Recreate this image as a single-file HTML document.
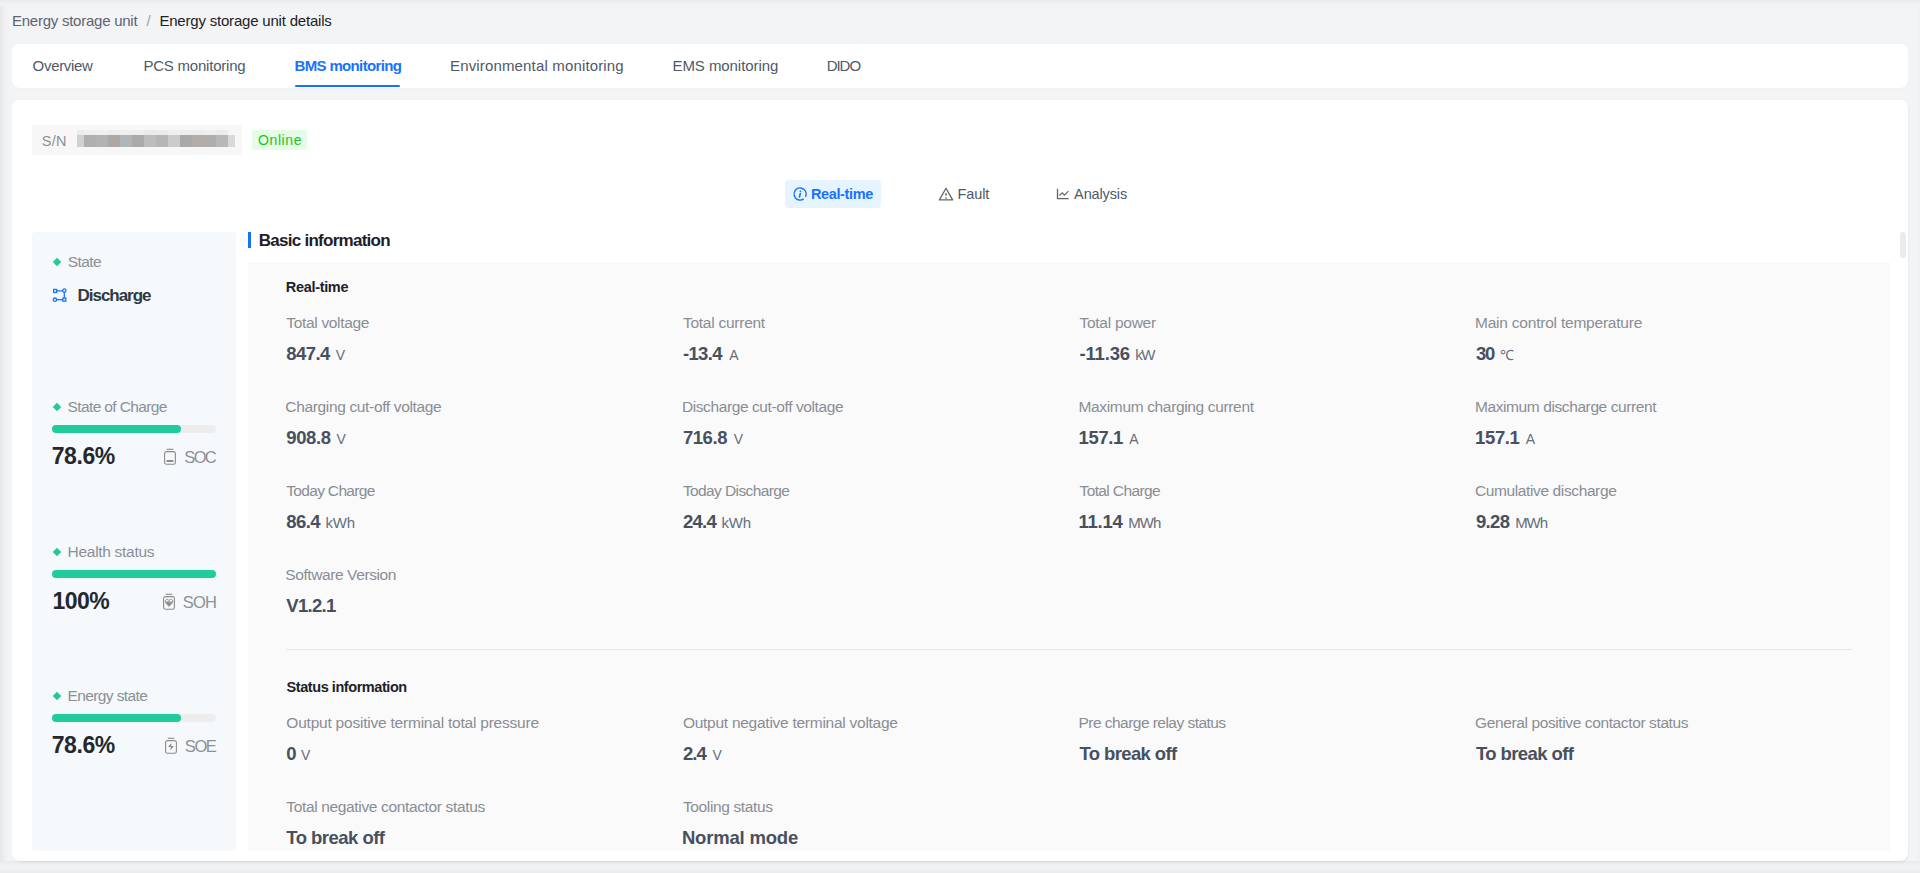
<!DOCTYPE html>
<html><head><meta charset="utf-8">
<style>
*{box-sizing:border-box;margin:0;padding:0}
html,body{width:1920px;height:873px;overflow:hidden}
body{background:#f3f4f6;font-family:"Liberation Sans",sans-serif;position:relative}
.t{position:absolute;white-space:nowrap;line-height:1;font-family:"Liberation Sans",sans-serif}
.v{font-size:18px;font-weight:700;color:#3d4757}
.v .u{font-size:14px;font-weight:400;color:#5c6675;margin-left:6px}
.box{position:absolute}
</style></head><body>
<div class="box" style="left:0;top:0;width:12px;height:873px;background:linear-gradient(90deg,#e6e7e9 0,#e9eaec 2px,#eff0f2 5px,#f3f4f6 10px,#f3f4f6 12px)"></div>
<div class="box" style="left:1908px;top:0;width:12px;height:873px;background:linear-gradient(90deg,#f3f4f6 0,#f3f4f6 8px,#f1f2f4 11px,#eeeff1 12px)"></div>
<div class="box" style="left:0;top:861px;width:1920px;height:12px;background:linear-gradient(180deg,#e9eaec 0,#eff0f2 4px,#f1f2f4 7px,#eaebed 12px)"></div>
<div class="box" style="left:0;top:0;width:1920px;height:6px;background:linear-gradient(180deg,#e9eaec 0,#eeeff1 2px,#f3f4f6 6px)"></div>
<!-- nav card -->
<div class="box" style="left:12px;top:44px;width:1896px;height:44px;background:#fff;border-radius:8px;box-shadow:0 1px 2px -1px rgba(0,0,0,0.06)"></div>
<div class="box" style="left:295px;top:85px;width:105px;height:2px;background:#1772ff;border-radius:1px"></div>
<!-- main card -->
<div class="box" style="left:12px;top:100px;width:1896px;height:761px;background:#fff;border-radius:8px;box-shadow:1px 2px 3px -1px rgba(0,0,0,0.09)"></div>
<!-- SN box -->
<div class="box" style="left:32px;top:125px;width:210px;height:30px;background:#f7f7f7;border-radius:2px"></div>
<div class="box" style="left:77px;top:130px;width:7px;height:5px;background:#ececec"></div>
<div class="box" style="left:77px;top:135px;width:7px;height:12px;background:#d3d1cf"></div>
<div class="box" style="left:84px;top:130px;width:12px;height:5px;background:#efefef"></div>
<div class="box" style="left:84px;top:135px;width:12px;height:12px;background:#aeb0b0"></div>
<div class="box" style="left:96px;top:130px;width:12px;height:5px;background:#f1f1f1"></div>
<div class="box" style="left:96px;top:135px;width:12px;height:12px;background:#b3b3b3"></div>
<div class="box" style="left:108px;top:130px;width:12px;height:5px;background:#eeeeee"></div>
<div class="box" style="left:108px;top:135px;width:12px;height:12px;background:#aea7a4"></div>
<div class="box" style="left:120px;top:130px;width:12px;height:5px;background:#f0f0f0"></div>
<div class="box" style="left:120px;top:135px;width:12px;height:12px;background:#b1b5ba"></div>
<div class="box" style="left:132px;top:130px;width:12px;height:5px;background:#efefef"></div>
<div class="box" style="left:132px;top:135px;width:12px;height:12px;background:#aaaaaa"></div>
<div class="box" style="left:144px;top:130px;width:12px;height:5px;background:#ebebeb"></div>
<div class="box" style="left:144px;top:135px;width:12px;height:12px;background:#bdbdbd"></div>
<div class="box" style="left:156px;top:130px;width:12px;height:5px;background:#ebebeb"></div>
<div class="box" style="left:156px;top:135px;width:12px;height:12px;background:#b6b6b6"></div>
<div class="box" style="left:168px;top:130px;width:12px;height:5px;background:#f0f0f0"></div>
<div class="box" style="left:168px;top:135px;width:12px;height:12px;background:#cccbc9"></div>
<div class="box" style="left:180px;top:130px;width:12px;height:5px;background:#eeeeee"></div>
<div class="box" style="left:180px;top:135px;width:12px;height:12px;background:#a7a9ab"></div>
<div class="box" style="left:192px;top:130px;width:12px;height:5px;background:#ededed"></div>
<div class="box" style="left:192px;top:135px;width:12px;height:12px;background:#b3adaa"></div>
<div class="box" style="left:204px;top:130px;width:12px;height:5px;background:#efefef"></div>
<div class="box" style="left:204px;top:135px;width:12px;height:12px;background:#aeaeae"></div>
<div class="box" style="left:216px;top:130px;width:12px;height:5px;background:#ececec"></div>
<div class="box" style="left:216px;top:135px;width:12px;height:12px;background:#b7b8bc"></div>
<div class="box" style="left:228px;top:130px;width:7px;height:5px;background:#f6f6f6"></div>
<div class="box" style="left:228px;top:135px;width:7px;height:12px;background:#d9d9db"></div>
<div class="box" style="left:252px;top:130px;width:55px;height:20px;background:#e5fde6;border-radius:3px"></div>
<!-- segmented -->
<div class="box" style="left:785px;top:180px;width:96px;height:28px;background:#e6f4ff;border-radius:4px"></div>
<svg class="box" style="left:792px;top:186px" width="16" height="16" viewBox="0 0 16 16"><path d="M11.685 12.935 A6.1 6.1 0 1 1 13.435 10.957" fill="none" stroke="#1772ff" stroke-width="1.4"/><circle cx="8.45" cy="5.3" r="0.9" fill="#1772ff"/><path d="M8.3 7.5 L7.5 10.9" stroke="#1772ff" stroke-width="1.6" stroke-linecap="round"/></svg>
<svg class="box" style="left:938px;top:187px" width="16" height="15" viewBox="0 0 16 15"><path d="M8 1.3 L14.6 12.9 H1.4 Z" fill="none" stroke="#666" stroke-width="1.3" stroke-linejoin="round"/><path d="M8 5.9 V8.7" stroke="#777" stroke-width="1.5"/><rect x="7.25" y="10.1" width="1.5" height="1.8" fill="#888"/></svg>
<svg class="box" style="left:1056px;top:187px" width="14" height="14" viewBox="0 0 14 14"><path d="M1.5 1.8 V11.7 H12.7" fill="none" stroke="#666" stroke-width="1.3"/><path d="M3.3 8.5 L6.3 5.9 L8.4 8.2 L12.4 4.1" fill="none" stroke="#666" stroke-width="1.2"/></svg>
<!-- left panel -->
<div class="box" style="left:32px;top:232px;width:204px;height:619px;background:#f5f9fb;border-radius:4px"></div>
<div class="box" style="left:54px;top:259px;width:6px;height:6px;background:#23c99a;transform:rotate(45deg)"></div>
<svg class="box" style="left:52px;top:287px" width="16" height="16" viewBox="0 0 16 16"><g fill="none" stroke="#1772ff" stroke-width="1.3"><rect x="1.65" y="2.45" width="3" height="3"/><circle cx="12.3" cy="3.6" r="1.65"/><path d="M4.6 3.95 H10.6 M12.3 5.2 V11"/><circle cx="2.95" cy="12.65" r="1.65"/><rect x="10.8" y="11.1" width="3" height="3"/><path d="M4.6 12.65 H10.8"/></g></svg>
<div class="box" style="left:54px;top:404px;width:6px;height:6px;background:#23c99a;transform:rotate(45deg)"></div>
<div class="box" style="left:52px;top:425px;width:164px;height:8px;background:#ededed;border-radius:4px"></div>
<div class="box" style="left:52px;top:425px;width:129px;height:8px;background:#20cc9b;border-radius:4px"></div>
<div class="box" style="left:54px;top:549px;width:6px;height:6px;background:#23c99a;transform:rotate(45deg)"></div>
<div class="box" style="left:52px;top:570px;width:164px;height:8px;background:#20cc9b;border-radius:4px"></div>
<div class="box" style="left:54px;top:693px;width:6px;height:6px;background:#23c99a;transform:rotate(45deg)"></div>
<div class="box" style="left:52px;top:714px;width:164px;height:8px;background:#ededed;border-radius:4px"></div>
<div class="box" style="left:52px;top:714px;width:129px;height:8px;background:#20cc9b;border-radius:4px"></div>
<!-- battery icons -->
<svg class="box" style="left:163px;top:448px" width="14" height="17" viewBox="0 0 14 17"><path d="M3.7 1.3 H10.3" stroke="#8c8c8c" stroke-width="1.1"/><rect x="1.6" y="3.6" width="10.8" height="12.6" rx="1.8" fill="none" stroke="#8c8c8c" stroke-width="1.1"/><rect x="3.6" y="12" width="6.8" height="2" fill="#8c8c8c"/></svg>
<svg class="box" style="left:162px;top:593px" width="14" height="17" viewBox="0 0 14 17"><path d="M3.7 1.3 H10.3" stroke="#8c8c8c" stroke-width="1.1"/><rect x="1.6" y="3.6" width="10.8" height="12.6" rx="1.8" fill="none" stroke="#8c8c8c" stroke-width="1.1"/><path d="M7 13.3 L3.7 9.8 Q2.9 8.5 3.5 7.3 Q4.3 6 5.6 6.3 Q6.5 6.6 7 7.5 Q7.5 6.6 8.4 6.3 Q9.7 6 10.5 7.3 Q11.1 8.5 10.3 9.8 Z" fill="none" stroke="#8c8c8c" stroke-width="1"/><path d="M3.4 9.2 H10.6 L7 13.3 Z" fill="#8c8c8c"/><path d="M3.6 8.9 H5.3 L6 7.9 L7 9.3 L7.8 8.2 L8.4 8.9 H10.4" fill="none" stroke="#8c8c8c" stroke-width="0.8"/></svg>
<svg class="box" style="left:164px;top:737px" width="14" height="17" viewBox="0 0 14 17"><path d="M3.7 1.3 H10.3" stroke="#8c8c8c" stroke-width="1.1"/><rect x="1.6" y="3.6" width="10.8" height="12.6" rx="1.8" fill="none" stroke="#8c8c8c" stroke-width="1.1"/><path d="M7.5 6.1 L4.1 10.1 H6.9 L6.3 13.5 L9.9 9.1 H7.1 Z" fill="#8c8c8c"/></svg>
<!-- basic info -->
<div class="box" style="left:248px;top:232px;width:3px;height:16px;background:#1772ff"></div>
<div class="box" style="left:248px;top:262px;width:1642px;height:589px;background:#fafafa"></div>
<div class="box" style="left:286px;top:649px;width:1566px;height:1px;background:#e5e6e8"></div>
<div class="box" style="left:1900px;top:232px;width:6px;height:26px;background:#ebebeb;border-radius:3px"></div>
<span class="t" style="left:12.0px;top:13.2px;font-size:15px;font-weight:400;color:#5d6470;letter-spacing:-0.25px;">Energy storage unit</span>
<span class="t" style="left:146.6px;top:13.2px;font-size:15px;font-weight:400;color:#9aa0a8;">/</span>
<span class="t" style="left:159.4px;top:13.2px;font-size:15px;font-weight:400;color:#1d2129;letter-spacing:-0.2px;">Energy storage unit details</span>
<span class="t" style="left:32.6px;top:57.9px;font-size:15px;font-weight:400;color:#4e5969;letter-spacing:-0.314px;">Overview</span>
<span class="t" style="left:143.4px;top:57.9px;font-size:15px;font-weight:400;color:#4e5969;letter-spacing:-0.215px;">PCS monitoring</span>
<span class="t" style="left:294.6px;top:57.9px;font-size:15px;font-weight:700;color:#1772ff;letter-spacing:-0.662px;">BMS monitoring</span>
<span class="t" style="left:450.0px;top:57.9px;font-size:15px;font-weight:400;color:#4e5969;letter-spacing:0.157px;">Environmental monitoring</span>
<span class="t" style="left:672.5px;top:57.9px;font-size:15px;font-weight:400;color:#4e5969;letter-spacing:-0.069px;">EMS monitoring</span>
<span class="t" style="left:826.7px;top:57.9px;font-size:15px;font-weight:400;color:#4e5969;letter-spacing:-1.033px;">DIDO</span>
<span class="t" style="left:41.7px;top:134.0px;font-size:14.5px;font-weight:400;color:#8a9099;letter-spacing:0.3px;">S/N</span>
<span class="t" style="left:258.0px;top:132.9px;font-size:14px;font-weight:400;color:#1cc41c;letter-spacing:0.6px;">Online</span>
<span class="t" style="left:810.9px;top:186.9px;font-size:14.5px;font-weight:700;color:#1772ff;letter-spacing:-0.35px;">Real-time</span>
<span class="t" style="left:957.6px;top:186.9px;font-size:14.5px;font-weight:400;color:#4e5969;letter-spacing:-0.15px;">Fault</span>
<span class="t" style="left:1074.1px;top:186.7px;font-size:14.5px;font-weight:400;color:#4e5969;letter-spacing:-0.129px;">Analysis</span>
<span class="t" style="left:67.8px;top:253.7px;font-size:15.5px;font-weight:400;color:#8a8f98;letter-spacing:-0.6px;">State</span>
<span class="t" style="left:77.6px;top:286.8px;font-size:17px;font-weight:700;color:#2f3846;letter-spacing:-1.037px;">Discharge</span>
<span class="t" style="left:67.6px;top:398.8px;font-size:15.5px;font-weight:400;color:#8a8f98;letter-spacing:-0.621px;">State of Charge</span>
<span class="t" style="left:51.7px;top:445.1px;font-size:23px;font-weight:700;color:#24282e;letter-spacing:-0.425px;">78.6%</span>
<span class="t" style="left:184.3px;top:448.5px;font-size:16.5px;font-weight:400;color:#8c9097;letter-spacing:-1.65px;">SOC</span>
<span class="t" style="left:67.6px;top:543.8px;font-size:15.5px;font-weight:400;color:#8a8f98;letter-spacing:-0.3px;">Health status</span>
<span class="t" style="left:52.5px;top:590.1px;font-size:23px;font-weight:700;color:#24282e;letter-spacing:-0.583px;">100%</span>
<span class="t" style="left:182.8px;top:593.5px;font-size:16.5px;font-weight:400;color:#8c9097;letter-spacing:-0.875px;">SOH</span>
<span class="t" style="left:67.6px;top:687.8px;font-size:15.5px;font-weight:400;color:#8a8f98;letter-spacing:-0.618px;">Energy state</span>
<span class="t" style="left:51.7px;top:734.1px;font-size:23px;font-weight:700;color:#24282e;letter-spacing:-0.425px;">78.6%</span>
<span class="t" style="left:184.8px;top:737.5px;font-size:16.5px;font-weight:400;color:#8c9097;letter-spacing:-1.4px;">SOE</span>
<span class="t" style="left:258.8px;top:231.8px;font-size:17px;font-weight:700;color:#1d2129;letter-spacing:-0.738px;">Basic information</span>
<span class="t" style="left:285.8px;top:279.5px;font-size:14.5px;font-weight:700;color:#1d2129;letter-spacing:-0.325px;">Real-time</span>
<span class="t" style="left:286.6px;top:679.6px;font-size:14.5px;font-weight:700;color:#1d2129;letter-spacing:-0.441px;">Status information</span>
<span class="t" style="left:286.3px;top:314.8px;font-size:15.5px;font-weight:400;color:#898d94;letter-spacing:-0.325px;">Total voltage</span>
<span class="t" style="left:286.3px;top:344.6px;font-size:18.5px;font-weight:700;color:#485060;letter-spacing:-0.575px;">847.4</span>
<span class="t" style="left:335.8px;top:347.7px;font-size:14px;font-weight:400;color:#666e7a;">V</span>
<span class="t" style="left:682.9px;top:314.8px;font-size:15.5px;font-weight:400;color:#898d94;letter-spacing:-0.25px;">Total current</span>
<span class="t" style="left:682.9px;top:344.6px;font-size:18.5px;font-weight:700;color:#485060;letter-spacing:-0.65px;">-13.4</span>
<span class="t" style="left:729.3px;top:347.7px;font-size:14px;font-weight:400;color:#666e7a;">A</span>
<span class="t" style="left:1079.5px;top:314.8px;font-size:15.5px;font-weight:400;color:#898d94;letter-spacing:-0.27px;">Total power</span>
<span class="t" style="left:1079.5px;top:344.6px;font-size:18.5px;font-weight:700;color:#485060;letter-spacing:-0.16px;">-11.36</span>
<span class="t" style="left:1135.3px;top:346.9px;font-size:15px;font-weight:400;color:#666e7a;letter-spacing:-1.5px;">kW</span>
<span class="t" style="left:1475.0px;top:314.8px;font-size:15.5px;font-weight:400;color:#898d94;letter-spacing:-0.217px;">Main control temperature</span>
<span class="t" style="left:1476.0px;top:344.6px;font-size:18.5px;font-weight:700;color:#485060;letter-spacing:-1.2px;">30</span>
<span class="t" style="left:1499.6px;top:347.7px;font-size:14px;font-weight:400;color:#666e7a;">℃</span>
<span class="t" style="left:285.3px;top:398.8px;font-size:15.5px;font-weight:400;color:#898d94;letter-spacing:-0.343px;">Charging cut-off voltage</span>
<span class="t" style="left:286.3px;top:428.6px;font-size:18.5px;font-weight:700;color:#485060;letter-spacing:-0.4px;">908.8</span>
<span class="t" style="left:336.5px;top:431.7px;font-size:14px;font-weight:400;color:#666e7a;">V</span>
<span class="t" style="left:681.9px;top:398.8px;font-size:15.5px;font-weight:400;color:#898d94;letter-spacing:-0.396px;">Discharge cut-off voltage</span>
<span class="t" style="left:682.9px;top:428.6px;font-size:18.5px;font-weight:700;color:#485060;letter-spacing:-0.425px;">716.8</span>
<span class="t" style="left:733.7px;top:431.7px;font-size:14px;font-weight:400;color:#666e7a;">V</span>
<span class="t" style="left:1078.5px;top:398.8px;font-size:15.5px;font-weight:400;color:#898d94;letter-spacing:-0.348px;">Maximum charging current</span>
<span class="t" style="left:1078.5px;top:428.6px;font-size:18.5px;font-weight:700;color:#485060;letter-spacing:-0.35px;">157.1</span>
<span class="t" style="left:1129.2px;top:431.7px;font-size:14px;font-weight:400;color:#666e7a;">A</span>
<span class="t" style="left:1475.0px;top:398.8px;font-size:15.5px;font-weight:400;color:#898d94;letter-spacing:-0.404px;">Maximum discharge current</span>
<span class="t" style="left:1475.0px;top:428.6px;font-size:18.5px;font-weight:700;color:#485060;letter-spacing:-0.35px;">157.1</span>
<span class="t" style="left:1525.7px;top:431.7px;font-size:14px;font-weight:400;color:#666e7a;">A</span>
<span class="t" style="left:286.3px;top:482.8px;font-size:15.5px;font-weight:400;color:#898d94;letter-spacing:-0.682px;">Today Charge</span>
<span class="t" style="left:286.3px;top:512.6px;font-size:18.5px;font-weight:700;color:#485060;letter-spacing:-0.567px;">86.4</span>
<span class="t" style="left:325.4px;top:514.9px;font-size:15px;font-weight:400;color:#666e7a;letter-spacing:-0.1px;">kWh</span>
<span class="t" style="left:682.9px;top:482.8px;font-size:15.5px;font-weight:400;color:#898d94;letter-spacing:-0.6px;">Today Discharge</span>
<span class="t" style="left:682.9px;top:512.6px;font-size:18.5px;font-weight:700;color:#485060;letter-spacing:-0.733px;">24.4</span>
<span class="t" style="left:721.5px;top:514.9px;font-size:15px;font-weight:400;color:#666e7a;letter-spacing:-0.15px;">kWh</span>
<span class="t" style="left:1079.5px;top:482.8px;font-size:15.5px;font-weight:400;color:#898d94;letter-spacing:-0.618px;">Total Charge</span>
<span class="t" style="left:1078.5px;top:512.6px;font-size:18.5px;font-weight:700;color:#485060;letter-spacing:-0.25px;">11.14</span>
<span class="t" style="left:1128.2px;top:514.9px;font-size:15px;font-weight:400;color:#666e7a;letter-spacing:-0.9px;">MWh</span>
<span class="t" style="left:1475.0px;top:482.8px;font-size:15.5px;font-weight:400;color:#898d94;letter-spacing:-0.384px;">Cumulative discharge</span>
<span class="t" style="left:1476.0px;top:512.6px;font-size:18.5px;font-weight:700;color:#485060;letter-spacing:-0.667px;">9.28</span>
<span class="t" style="left:1515.2px;top:514.9px;font-size:15px;font-weight:400;color:#666e7a;letter-spacing:-1.1px;">MWh</span>
<span class="t" style="left:285.3px;top:566.8px;font-size:15.5px;font-weight:400;color:#898d94;letter-spacing:-0.407px;">Software Version</span>
<span class="t" style="left:286.3px;top:596.6px;font-size:18.5px;font-weight:700;color:#485060;letter-spacing:-0.72px;">V1.2.1</span>
<span class="t" style="left:286.3px;top:714.8px;font-size:15.5px;font-weight:400;color:#898d94;letter-spacing:-0.218px;">Output positive terminal total pressure</span>
<span class="t" style="left:286.3px;top:744.6px;font-size:18.5px;font-weight:700;color:#485060;">0</span>
<span class="t" style="left:301.0px;top:747.7px;font-size:14px;font-weight:400;color:#666e7a;">V</span>
<span class="t" style="left:682.9px;top:714.8px;font-size:15.5px;font-weight:400;color:#898d94;letter-spacing:-0.261px;">Output negative terminal voltage</span>
<span class="t" style="left:682.9px;top:744.6px;font-size:18.5px;font-weight:700;color:#485060;letter-spacing:-0.85px;">2.4</span>
<span class="t" style="left:712.6px;top:747.7px;font-size:14px;font-weight:400;color:#666e7a;">V</span>
<span class="t" style="left:1078.5px;top:714.8px;font-size:15.5px;font-weight:400;color:#898d94;letter-spacing:-0.536px;">Pre charge relay status</span>
<span class="t" style="left:1079.5px;top:744.6px;font-size:18.5px;font-weight:700;color:#485060;letter-spacing:-0.618px;">To break off</span>
<span class="t" style="left:1475.0px;top:714.8px;font-size:15.5px;font-weight:400;color:#898d94;letter-spacing:-0.381px;">General positive contactor status</span>
<span class="t" style="left:1476.0px;top:744.6px;font-size:18.5px;font-weight:700;color:#485060;letter-spacing:-0.6px;">To break off</span>
<span class="t" style="left:286.3px;top:798.8px;font-size:15.5px;font-weight:400;color:#898d94;letter-spacing:-0.35px;">Total negative contactor status</span>
<span class="t" style="left:286.3px;top:828.6px;font-size:18.5px;font-weight:700;color:#485060;letter-spacing:-0.527px;">To break off</span>
<span class="t" style="left:682.9px;top:798.8px;font-size:15.5px;font-weight:400;color:#898d94;letter-spacing:-0.362px;">Tooling status</span>
<span class="t" style="left:681.9px;top:828.6px;font-size:18.5px;font-weight:700;color:#485060;letter-spacing:-0.19px;">Normal mode</span>
</body></html>
